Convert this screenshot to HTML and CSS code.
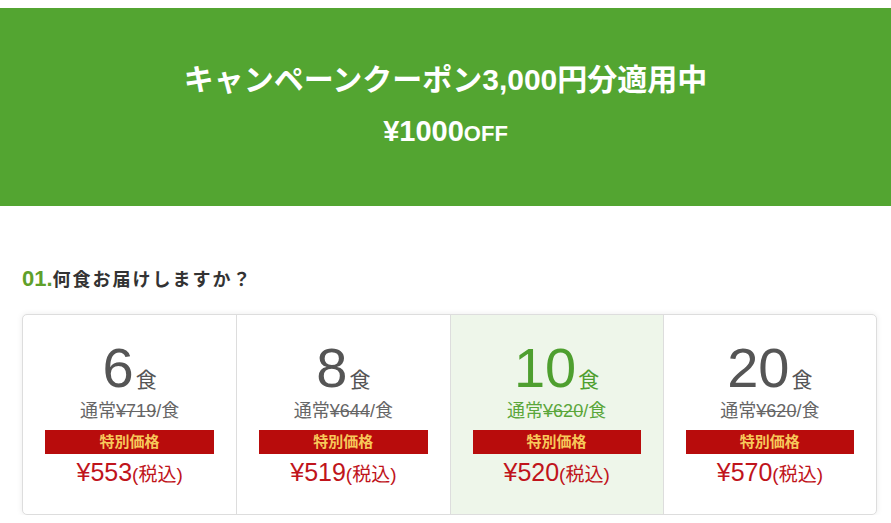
FILE: index.html
```html
<!DOCTYPE html>
<html lang="ja">
<head>
  <meta charset="UTF-8" />
  <meta name="viewport" content="width=device-width, initial-scale=1.0"/>
  <title>コース選択</title>
  <link rel="stylesheet" href="styles.css">
</head>
<body>
  <div class="banner">
    <p class="banner-title">キャンペーンクーポン3,000円分適用中</p>
    <p class="banner-off">¥1000<span>OFF</span></p>
  </div>

  <div class="plan-area">
    <h3 class="step-title"><span class="step-no">01.</span>何食お届けしますか？</h3>

    <div class="plan-list">
      <div class="plan-item">
        <p class="plan-count">6<span>食</span></p>
        <p class="plan-normal">通常<s>¥719</s>/食</p>
        <p class="plan-label">特別価格</p>
        <p class="plan-price">¥553<span>(税込)</span></p>
      </div>
      <div class="plan-item">
        <p class="plan-count">8<span>食</span></p>
        <p class="plan-normal">通常<s>¥644</s>/食</p>
        <p class="plan-label">特別価格</p>
        <p class="plan-price">¥519<span>(税込)</span></p>
      </div>
      <div class="plan-item selected">
        <p class="plan-count">10<span>食</span></p>
        <p class="plan-normal">通常<s>¥620</s>/食</p>
        <p class="plan-label">特別価格</p>
        <p class="plan-price">¥520<span>(税込)</span></p>
      </div>
      <div class="plan-item">
        <p class="plan-count">20<span>食</span></p>
        <p class="plan-normal">通常<s>¥620</s>/食</p>
        <p class="plan-label">特別価格</p>
        <p class="plan-price">¥570<span>(税込)</span></p>
      </div>
    </div>
  </div>
</body>
</html>
```

FILE: styles.css
```css
body {
  font-family: 'Liberation Sans', 'Noto Sans CJK JP', sans-serif;
  margin: 0;
  padding: 8px 0 0 0;
  color: #333;
  background-color: #fff;
}
p {
  margin: 0;
}
.banner {
  height: 198px;
  background-color: #53a531;
  color: #fff;
  display: flex;
  flex-direction: column;
  align-items: center;
  justify-content: center;
  gap: 16px;
  padding-bottom: 4px;
  box-sizing: border-box;
}
.banner-title {
  font-size: 30px;
  font-weight: bold;
  line-height: 1.2;
}
.banner-off {
  font-size: 29px;
  font-weight: bold;
  line-height: 1.2;
}
.banner-off span {
  font-size: 22px;
}
.plan-area {
  padding: 60px 14px 0 22px;
}
.step-title {
  margin: 0 0 21px 0;
  font-size: 18px;
  letter-spacing: 2px;
  color: #333;
  line-height: 26px;
}
.step-no {
  color: #5fa02a;
  font-size: 22px;
  letter-spacing: 0;
}
.plan-list {
  display: grid;
  grid-template-columns: repeat(4, 1fr);
  border: 1px solid #ddd;
  border-radius: 5px;
  box-shadow: 0 0 6px rgba(0, 0, 0, 0.08);
  overflow: hidden;
  background-color: #fff;
}
.plan-item {
  padding: 34px 22px 23px 22px;
  text-align: center;
  border-left: 1px solid #ddd;
  color: #555;
}
.plan-item:first-child {
  border-left: none;
}
.plan-item.selected {
  background-color: #eef6ea;
  color: #4e9f2f;
}
.plan-count {
  font-size: 56px;
  line-height: 38px;
}
.plan-count span {
  font-size: 21px;
  margin-left: 2px;
}
.plan-normal {
  font-size: 18px;
  line-height: 24px;
  color: #666;
}
.selected .plan-normal {
  color: #5aa63a;
}
.plan-label {
  margin-top: 7px;
  background-color: #b80c0c;
  color: #f7c85a;
  font-size: 15px;
  font-weight: bold;
  line-height: 24px;
}
.plan-price {
  margin-top: 2px;
  font-size: 25px;
  line-height: 32px;
  color: #c0141b;
}
.plan-price span {
  font-size: 19px;
}
```
